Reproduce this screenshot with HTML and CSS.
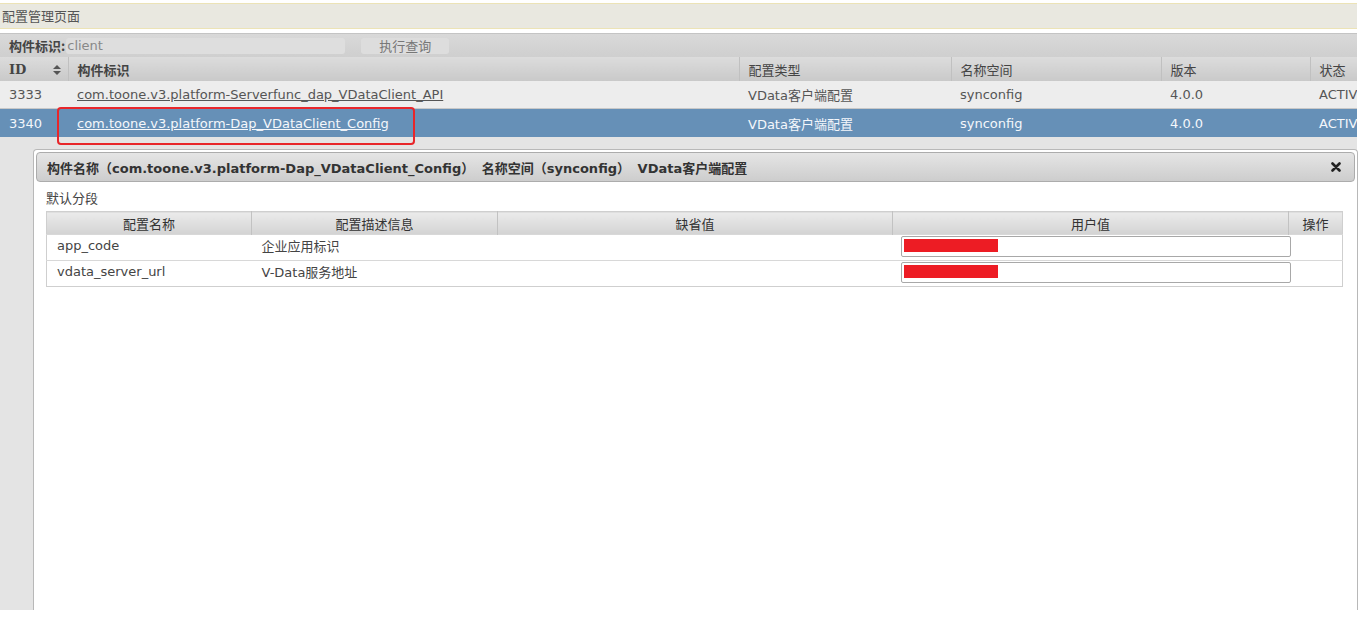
FILE: index.html
```html
<!DOCTYPE html>
<html lang="zh-CN">
<head>
    <meta charset="UTF-8">
    <title>配置管理页面</title>
    <link rel="stylesheet" href="styles.css">
</head>
<body>
<div class="page">
    <div class="titlebar">配置管理页面</div>

    <div class="grid-wrap">
        <div class="toolbar">
            <span class="tb-label">构件标识:</span>
            <div class="tb-input">client</div>
            <div class="tb-button">执行查询</div>
        </div>
        <table class="grid">
            <colgroup>
                <col style="width:68px"><col style="width:671px"><col style="width:212px">
                <col style="width:210px"><col style="width:149px"><col style="width:100px">
            </colgroup>
            <thead>
                <tr>
                    <th class="col-id">ID <span class="sort"><svg width="8" height="10" viewBox="0 0 8 10"><path d="M4 0 L8 4 L0 4 Z M0 6 L8 6 L4 10 Z" fill="#555"/></svg></span></th>
                    <th class="strong">构件标识</th>
                    <th>配置类型</th>
                    <th>名称空间</th>
                    <th>版本</th>
                    <th>状态</th>
                </tr>
            </thead>
            <tbody>
                <tr class="row">
                    <td>3333</td>
                    <td><a href="#">com.toone.v3.platform-Serverfunc_dap_VDataClient_API</a></td>
                    <td>VData客户端配置</td>
                    <td>synconfig</td>
                    <td>4.0.0</td>
                    <td>ACTIVE</td>
                </tr>
                <tr class="row selected">
                    <td>3340</td>
                    <td><a href="#">com.toone.v3.platform-Dap_VDataClient_Config</a></td>
                    <td>VData客户端配置</td>
                    <td>synconfig</td>
                    <td>4.0.0</td>
                    <td>ACTIVE</td>
                </tr>
            </tbody>
        </table>
    </div>

    <div class="detail-area">
        <div class="dialog">
            <div class="dlg-head">
                <span class="dlg-title">构件名称（com.toone.v3.platform-Dap_VDataClient_Config） 名称空间（synconfig） VData客户端配置</span>
                <svg class="dlg-close" width="10" height="10" viewBox="0 0 10 10"><path d="M1.5 1.5 L8.5 8.5 M8.5 1.5 L1.5 8.5" stroke="#222" stroke-width="2.6" stroke-linecap="round"/></svg>
            </div>
            <div class="dlg-body">
                <div class="section">默认分段</div>
                <table class="cfg">
                    <colgroup>
                        <col style="width:205px"><col style="width:246px"><col style="width:395px">
                        <col style="width:396px"><col style="width:54px">
                    </colgroup>
                    <thead>
                        <tr><th>配置名称</th><th>配置描述信息</th><th>缺省值</th><th>用户值</th><th>操作</th></tr>
                    </thead>
                    <tbody>
                        <tr>
                            <td>app_code</td>
                            <td>企业应用标识</td>
                            <td></td>
                            <td class="val"><div class="val-input"><span class="redact"></span></div></td>
                            <td></td>
                        </tr>
                        <tr>
                            <td>vdata_server_url</td>
                            <td>V-Data服务地址</td>
                            <td></td>
                            <td class="val"><div class="val-input"><span class="redact"></span></div></td>
                            <td></td>
                        </tr>
                    </tbody>
                </table>
            </div>
        </div>
    </div>

    <!-- annotation box round the selected link -->
    <div class="mark"></div>
</div>
</body>
</html>
```

FILE: styles.css
```css
body { margin: 0; background: #fff; font-family: "DejaVu Sans", "Noto Sans CJK SC", sans-serif; font-size: 13px; color: #555; }
.page { position: relative; width: 1357px; height: 610px; display: flex; flex-direction: column; padding-top: 3px; box-sizing: border-box; }

/* title strip */
.titlebar {
    height: 24px; line-height: 24px; padding-left: 2px;
    background: #e9e8e0; border-top: 1px solid #ece3b6; border-bottom: 1px solid #ece3b6;
    font-family: "Noto Sans CJK SC", sans-serif; color: #555; font-size: 13px;
}

/* grid */
.grid-wrap { margin-top: 4px; overflow: hidden; }
.toolbar {
    height: 23px; border-top: 1px solid #c4c4c4;
    background: linear-gradient(#d9d9d9, #cfcfcf);
    display: flex; align-items: center; padding-left: 9px;
}
.tb-label { font-family: "Noto Sans CJK SC", sans-serif; font-weight: bold; color: #444; font-size: 13px; }
.tb-input {
    width: 278px; height: 16px; line-height: 16px; margin-left: 1px;
    background: #dedede; border-radius: 3px; color: #888; font-size: 13px; padding-left: 1px;
}
.tb-button {
    width: 88px; height: 16px; line-height: 16px; margin-left: 16px; text-align: center;
    background: #dddddd; border-radius: 3px; color: #777; font-family: "Noto Sans CJK SC", sans-serif; font-size: 13px;
}

.grid { width: 1410px; table-layout: fixed; border-collapse: collapse; }
.grid th {
    height: 24px; padding: 0 0 0 9px; text-align: left; font-weight: normal; color: #444;
    background: linear-gradient(#dcdcdc, #c9c9c9); border-left: 1px solid #c0c0c0;
    font-family: "Noto Sans CJK SC", sans-serif; font-size: 13px; white-space: nowrap;
}
.grid th:first-child { border-left: none; }
.grid th.col-id { font-family: "DejaVu Serif", serif; font-weight: bold; color: #444; position: relative; }
.grid th.strong { font-weight: bold; }
.sort { position: absolute; left: 53px; top: 8px; line-height: 0; }
.grid td {
    height: 27px; padding: 0 0 0 9px; white-space: nowrap; overflow: hidden;
    color: #555; font-size: 13px; font-family: "DejaVu Sans", "Noto Sans CJK SC", sans-serif;
}
.row td { background: #ededed; border-bottom: 1px solid #c8c8c8; }
.row a { color: #555; text-decoration: underline; }
.row.selected td { background: #6690b7; color: #f4f7fb; border-bottom: none; height: 28px; }
.row.selected a { color: #f4f7fb; }

.mark { position: absolute; left: 57px; top: 107px; width: 354px; height: 34px; border: 2px solid #e8262a; border-radius: 4px; }

/* detail dialog */
.detail-area { flex: 1; background: #e4e4e4; padding: 12px 0 0 33px; display: flex; }
.dialog {
    flex: 1; background: #fff; border: 1px solid #b8b8b8; border-bottom: none;
    border-radius: 4px 4px 0 0; padding: 2px 2px 0 2px;
}
.dlg-head {
    height: 28px; border: 1px solid #acacac; border-radius: 4px;
    background: linear-gradient(#e5e5e5, #cdcdcd);
    display: flex; align-items: center; justify-content: space-between; padding: 0 13px 0 10px;
}
.dlg-title { font-weight: bold; color: #333; font-size: 13px; font-family: "DejaVu Sans", "Noto Sans CJK SC", sans-serif; word-spacing: 3px; }
.dlg-body { padding: 8px 12px 0 10px; }
.section { font-family: "Noto Sans CJK SC", sans-serif; color: #444; font-size: 13px; height: 21px; line-height: 16px; }

.cfg { width: 1296px; table-layout: fixed; border-collapse: collapse; border: 1px solid #cfcfcf; }
.cfg th {
    height: 22px; padding: 0; font-weight: normal; color: #333; font-size: 13px;
    font-family: "Noto Sans CJK SC", sans-serif;
    background: linear-gradient(#ebebeb, #d3d3d3); border-left: 1px solid #c2c2c2;
}
.cfg th:first-child { border-left: none; }
.cfg td {
    height: 20px; padding: 0 0 5px 10px; border-top: 1px solid #d8d8d8; color: #444; font-size: 13px;
    white-space: nowrap; font-family: "DejaVu Sans", "Noto Sans CJK SC", sans-serif;
}
.cfg td.val { padding: 0 0 0 8px; vertical-align: top; }
.val-input {
    width: 384px; height: 15px; border: 1px solid #a8a8a8; border-radius: 2px; background: #fff;
    padding: 2px; margin-top: 1px;
}
.redact { display: block; width: 94px; height: 13px; background: #ed1c24; }
```
